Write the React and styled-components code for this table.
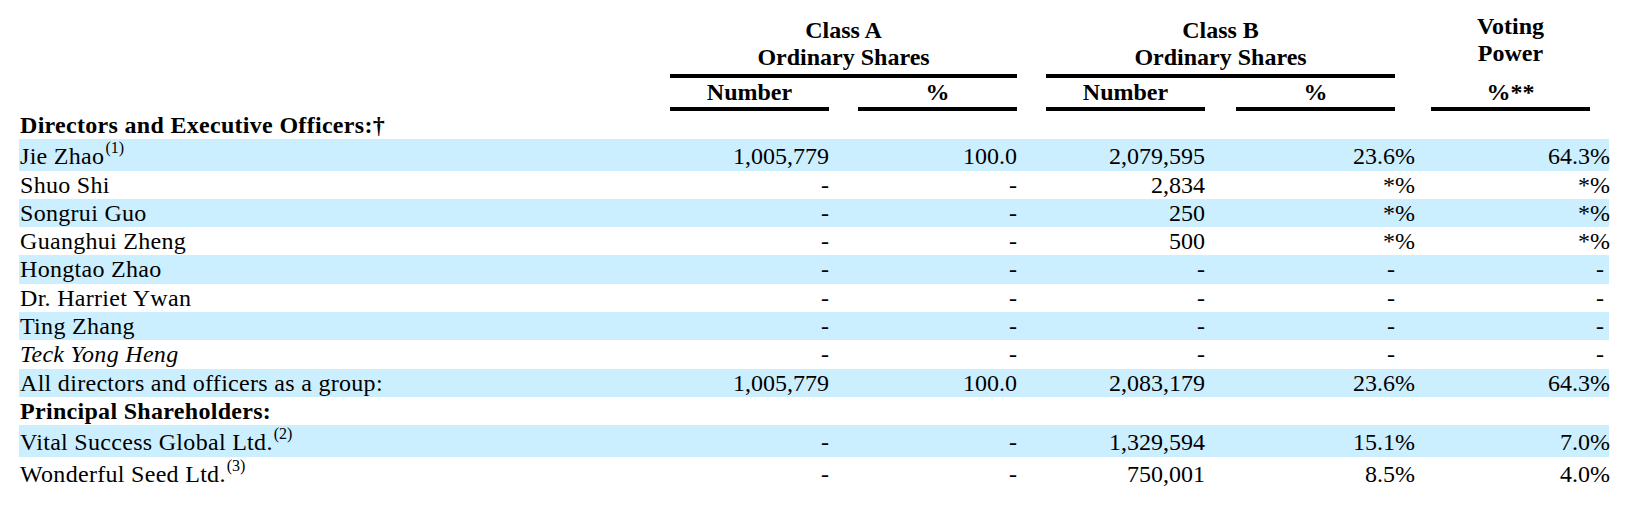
import React from "react";
import styled, { createGlobalStyle } from "styled-components";

// label | A number | gap | A % | gap | B number | gap | B % | gap | voting | tail
const COLS = "651px 159px 29px 159px 29px 159px 31px 159px 36px 159px 19px";

const GlobalStyle = createGlobalStyle`
    body {
        margin: 0;
        background: #fff;
        color: #000;
        font-family: "Liberation Serif", "Times New Roman", serif;
    }
`;

const rows = [
    { section: "Directors and Executive Officers:\u2020" },
    { label: "Jie Zhao", sup: "(1)", vals: ["1,005,779", "100.0", "2,079,595", "23.6%", "64.3%"] },
    { label: "Shuo Shi", vals: ["-", "-", "2,834", "*%", "*%"] },
    { label: "Songrui Guo", vals: ["-", "-", "250", "*%", "*%"] },
    { label: "Guanghui Zheng", vals: ["-", "-", "500", "*%", "*%"] },
    { label: "Hongtao Zhao", vals: ["-", "-", "-", "-", "-"] },
    { label: "Dr. Harriet Ywan", vals: ["-", "-", "-", "-", "-"] },
    { label: "Ting Zhang", vals: ["-", "-", "-", "-", "-"] },
    { label: "Teck Yong Heng", italic: true, vals: ["-", "-", "-", "-", "-"] },
    { label: "All directors and officers as a group:", vals: ["1,005,779", "100.0", "2,083,179", "23.6%", "64.3%"] },
    { section: "Principal Shareholders:" },
    { label: "Vital Success Global Ltd.", sup: "(2)", vals: ["-", "-", "1,329,594", "15.1%", "7.0%"] },
    { label: "Wonderful Seed Ltd.", sup: "(3)", vals: ["-", "-", "750,001", "8.5%", "4.0%"] },
];

// number goes in its column, a trailing % (or the voting dash) in the track after it
function split(v, col) {
    if (col === 4 && v === "-") return ["", "-"];
    if (v.endsWith("%")) return [v.slice(0, -1), "%"];
    return [v, ""];
}

function App() {
    let shade = false;
    return (
        <Page>
            <GlobalStyle />
            <HeadRow>
                <GroupHead $col="2 / span 3" $rule>Class A<br />Ordinary Shares</GroupHead>
                <GroupHead $col="6 / span 3" $rule>Class B<br />Ordinary Shares</GroupHead>
                <GroupHead $col="10">Voting<br />Power</GroupHead>
            </HeadRow>
            <HeadRow>
                <ColHead $col="2">Number</ColHead>
                <ColHead $col="4">%</ColHead>
                <ColHead $col="6">Number</ColHead>
                <ColHead $col="8">%</ColHead>
                <ColHead $col="10">%**</ColHead>
            </HeadRow>
            {rows.map((r, i) => {
                if (r.section) {
                    shade = false;
                    return (
                        <Row key={i}>
                            <Label $bold>{r.section}</Label>
                        </Row>
                    );
                }
                shade = !shade;
                return (
                    <Row key={i} $shade={shade}>
                        <Label $italic={r.italic}>
                            {r.label}
                            {r.sup && <Sup>{r.sup}</Sup>}
                        </Label>
                        {r.vals.map((v, c) => {
                            const [num, suffix] = split(v, c);
                            return (
                                <React.Fragment key={c}>
                                    <Value>{num}</Value>
                                    <Suffix $dash={suffix === "-"}>{suffix}</Suffix>
                                </React.Fragment>
                            );
                        })}
                    </Row>
                );
            })}
        </Page>
    );
}

const Page = styled.div`
    padding: 13px 0 0 19px;
    width: 1590px;
`;

const HeadRow = styled.div`
    display: grid;
    grid-template-columns: ${COLS};
    align-items: end;
    font-size: 24px;
    font-weight: bold;
`;

const GroupHead = styled.div`
    grid-column: ${p => p.$col};
    text-align: center;
    line-height: 27px;
    border-bottom: ${p => (p.$rule ? "4px solid #000" : "none")};
    padding-bottom: ${p => (p.$rule ? "3px" : "11px")};
`;

const ColHead = styled.div`
    grid-column: ${p => p.$col};
    text-align: center;
    line-height: 29px;
    border-bottom: 4px solid #000;
`;

const Row = styled.div`
    display: grid;
    grid-template-columns: ${COLS};
    align-items: baseline;
    font-size: 24px;
    line-height: 28.3px;
    background: ${p => (p.$shade ? "#ccefff" : "transparent")};
`;

const Label = styled.div`
    padding-left: 1px;
    white-space: nowrap;
    letter-spacing: 0.3px;
    font-weight: ${p => (p.$bold ? "bold" : "normal")};
    font-style: ${p => (p.$italic ? "italic" : "normal")};
`;

const Sup = styled.sup`
    font-size: 16px;
    line-height: 18px;
    vertical-align: 11px;
    margin-left: 1px;
    letter-spacing: 0;
`;

const Value = styled.div`
    text-align: right;
    white-space: nowrap;
`;

const Suffix = styled.div`
    text-align: left;
    white-space: nowrap;
    padding-left: ${p => (p.$dash ? "6px" : "0")};
`;

export default App;
